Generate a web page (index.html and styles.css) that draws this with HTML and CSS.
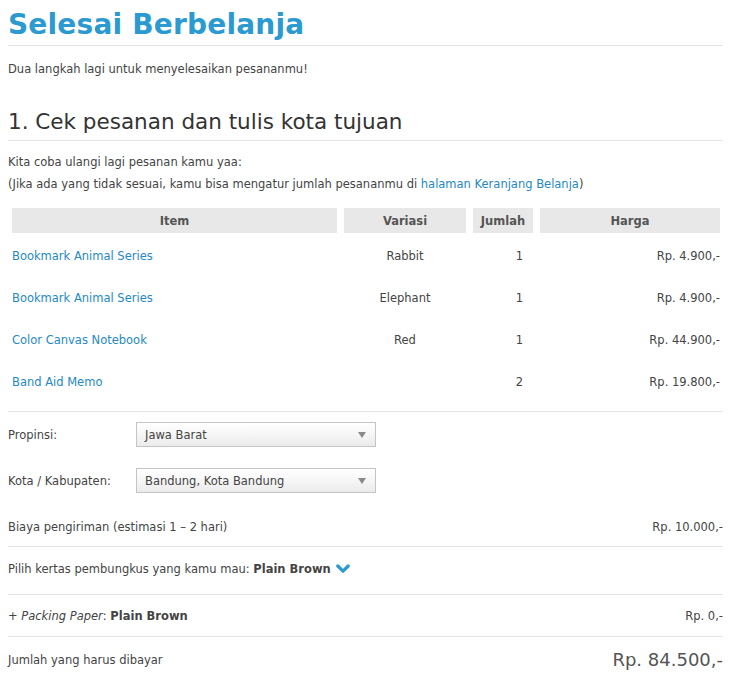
FILE: index.html
```html
<!DOCTYPE html>
<html lang="id">
<head>
<meta charset="utf-8">
<title>Selesai Berbelanja</title>
<link rel="stylesheet" href="styles.css">
</head>
<body>
<div class="page">
  <h1 class="title">Selesai Berbelanja</h1>
  <p class="intro">Dua langkah lagi untuk menyelesaikan pesananmu!</p>

  <h2 class="step">1. Cek pesanan dan tulis kota tujuan</h2>
  <p class="note">Kita coba ulangi lagi pesanan kamu yaa:<br>(Jika ada yang tidak sesuai, kamu bisa mengatur jumlah pesananmu di <a href="#" class="link">halaman Keranjang Belanja</a>)</p>

  <table class="items">
    <thead>
      <tr>
        <th class="c-item">Item</th>
        <th class="c-var">Variasi</th>
        <th class="c-qty">Jumlah</th>
        <th class="c-price">Harga</th>
      </tr>
    </thead>
    <tbody>
      <tr><td class="c-item"><a href="#" class="link">Bookmark Animal Series</a></td><td class="c-var">Rabbit</td><td class="c-qty">1</td><td class="c-price">Rp. 4.900,-</td></tr>
      <tr><td class="c-item"><a href="#" class="link">Bookmark Animal Series</a></td><td class="c-var">Elephant</td><td class="c-qty">1</td><td class="c-price">Rp. 4.900,-</td></tr>
      <tr><td class="c-item"><a href="#" class="link">Color Canvas Notebook</a></td><td class="c-var">Red</td><td class="c-qty">1</td><td class="c-price">Rp. 44.900,-</td></tr>
      <tr><td class="c-item"><a href="#" class="link">Band Aid Memo</a></td><td class="c-var"></td><td class="c-qty">2</td><td class="c-price">Rp. 19.800,-</td></tr>
    </tbody>
  </table>

  <div class="address">
    <div class="field">
      <span class="field-label">Propinsi:</span>
      <span class="select"><span class="select-text">Jawa Barat</span><span class="select-arrow"></span></span>
    </div>
    <div class="field">
      <span class="field-label">Kota / Kabupaten:</span>
      <span class="select"><span class="select-text">Bandung, Kota Bandung</span><span class="select-arrow"></span></span>
    </div>
    <div class="line-row ship">
      <span>Biaya pengiriman (estimasi 1 – 2 hari)</span>
      <span>Rp. 10.000,-</span>
    </div>
  </div>

  <div class="line-row wrap">
    <span>Pilih kertas pembungkus yang kamu mau: <b>Plain Brown</b>
      <svg class="chev" width="14" height="10" viewBox="0 0 14 10"><polyline points="1.8,2 7,7.2 12.2,2" fill="none" stroke="#2a9ad1" stroke-width="3.2" stroke-linecap="round" stroke-linejoin="round"/></svg>
    </span>
  </div>

  <div class="line-row packing">
    <span>+ <i>Packing Paper</i>: <b>Plain Brown</b></span>
    <span>Rp. 0,-</span>
  </div>

  <div class="line-row total">
    <span>Jumlah yang harus dibayar</span>
    <span class="total-amount">Rp. 84.500,-</span>
  </div>
</div>
</body>
</html>
```
FILE: styles.css
```css
html, body {
  margin: 0;
  padding: 0;
  background: #fff;
}
body {
  padding: 8px;
  font-family: "DejaVu Sans", Verdana, sans-serif;
  font-size: 11.5px;
  color: #444;
}
.page {
  width: 715px;
}
.title {
  margin: 0;
  font-size: 28px;
  line-height: 34px;
  font-weight: bold;
  color: #2a9ad1;
  padding-bottom: 3px;
  border-bottom: 1px solid #e3e3e3;
  letter-spacing: 0.2px;
}
.intro {
  margin: 16px 0 0;
  line-height: 14px;
}
.step {
  margin: 32px 0 0;
  font-size: 21.5px;
  line-height: 28px;
  font-weight: normal;
  color: #333;
  padding-bottom: 4px;
  border-bottom: 1px solid #e3e3e3;
}
.note {
  margin: 10px 0 0;
  line-height: 22px;
}
.link {
  color: #2589c3;
  text-decoration: none;
}
.items {
  margin: 13px 0 0 -3px;
  width: 722px;
  table-layout: fixed;
  border-collapse: separate;
  border-spacing: 7px 0;
  font-size: 11.5px;
}
.items th {
  background: #e8e8e8;
  color: #555;
  font-weight: bold;
  height: 25px;
  padding: 0;
  text-align: center;
}
.items td {
  height: 39px;
  padding: 3px 0 0;
  vertical-align: middle;
}
.items .c-item { width: 325px; text-align: left; }
.items th.c-item { text-align: center; }
.items .c-var { width: 122px; text-align: center; }
.items .c-qty { width: 60px; text-align: center; }
.items td.c-qty { text-align: right; padding-right: 10px; }
.items .c-price { width: 180px; text-align: right; }
.items th.c-price { text-align: center; }
.address {
  margin-top: 10px;
  border-top: 1px solid #e3e3e3;
  padding-top: 10px;
}
.field {
  display: flex;
  align-items: center;
  height: 25px;
  margin-bottom: 21px;
}
.field-label {
  width: 128px;
}
.select {
  position: relative;
  display: flex;
  align-items: center;
  width: 238px;
  height: 23px;
  border: 1px solid #c4c4c4;
  background: linear-gradient(#ffffff, #f6f6f6 50%, #ebebeb);
  font-size: 11.5px;
  color: #444;
}
.select-text {
  padding-left: 8px;
}
.select-arrow {
  position: absolute;
  right: 9px;
  top: 9px;
  width: 0;
  height: 0;
  border-left: 4px solid transparent;
  border-right: 4px solid transparent;
  border-top: 6px solid #8a8a8a;
}
.line-row {
  display: flex;
  justify-content: space-between;
  align-items: center;
  line-height: 22px;
  border-bottom: 1px solid #e3e3e3;
}
.ship {
  padding: 2px 0 8px;
}
.wrap {
  padding: 11px 0 14px;
}
.wrap b, .packing b {
  color: #444;
}
.chev {
  vertical-align: -1px;
  margin-left: 2px;
}
.packing {
  padding: 10px 0 9px;
}
.total {
  padding: 12px 0 0;
  border-bottom: none;
}
.total-amount {
  font-size: 18px;
  color: #555;
}
```
